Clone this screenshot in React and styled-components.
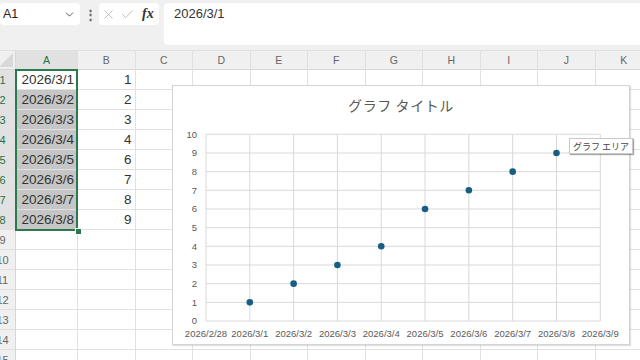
import React from 'react';
import styled, { createGlobalStyle } from 'styled-components';
import { ChevronDown, X, Check } from 'lucide-react';

const GlobalStyle = createGlobalStyle`
  html, body {
    margin: 0;
    padding: 0;
    width: 640px;
    height: 360px;
    overflow: hidden;
    background: #ffffff;
    font-family: "Liberation Sans", "Noto Sans CJK JP", sans-serif;
  }
`;

const Page = styled.div`
  width: 640px;
  height: 360px;
  display: flex;
  flex-direction: column;
  overflow: hidden;
`;

const TopBar = styled.div`
  height: 51px;
  flex: none;
  background: #f0f0f0;
  border-bottom: 1px solid #e0e0e0;
  box-sizing: border-box;
  display: flex;
  align-items: flex-start;
  padding-top: 3px;
  gap: 5px;
`;

const WhiteBox = styled.div`
  background: #ffffff;
  border-radius: 4px;
  height: ${(p) => p.$h || 22}px;
  box-sizing: border-box;
  display: flex;
  align-items: ${(p) => (p.$top ? 'flex-start' : 'center')};
`;

const NameBox = styled(WhiteBox)`
  width: 80px;
  padding: 0 4px 0 3px;
  justify-content: space-between;
  font-size: 12.5px;
  color: #222;
`;

const Kebab = styled.div`
  width: 10px;
  height: 22px;
  display: flex;
  align-items: center;
  justify-content: center;
  font-size: 13px;
  font-weight: bold;
  color: #666;
`;

const FxGroup = styled(WhiteBox)`
  width: 60px;
  padding: 0 4px 0 2px;
  gap: 4px;
  margin-left: -1px;
`;

const Fx = styled.span`
  font-family: "Liberation Serif", serif;
  font-style: italic;
  font-weight: bold;
  font-size: 14px;
  color: #333;
  margin-left: 3px;
`;

const FormulaBox = styled(WhiteBox)`
  flex: 1;
  padding: 3px 10px;
  font-size: 13px;
  color: #333;
  border-radius: 4px 0 0 4px;
`;

const Sheet = styled.div`
  position: relative;
  flex: 1;
  overflow: hidden;
`;

const Grid = styled.div`
  display: grid;
  margin-left: -12px;
  grid-template-columns: 28px 62px repeat(10, 57.5px);
  grid-template-rows: 19px;
  grid-auto-rows: 20px;
`;

const Corner = styled.div`
  background: #f0f0f0;
  border-right: 1px solid #d6d6d6;
  border-bottom: 1px solid #d6d6d6;
  box-sizing: border-box;
  position: relative;
  &::after {
    content: '';
    position: absolute;
    right: 2px;
    bottom: 2px;
    width: 14px;
    height: 14px;
    background: #d8d8d8;
    clip-path: polygon(100% 0, 100% 100%, 0 100%);
  }
`;

const ColHead = styled.div`
  background: ${(p) => (p.$active ? '#e1e1e1' : '#f0f0f0')};
  color: ${(p) => (p.$active ? '#217346' : '#666')};
  border-right: 1px solid #e0e0e0;
  border-bottom: 1px solid ${(p) => (p.$active ? '#217346' : '#d6d6d6')};
  box-sizing: border-box;
  font-size: 10.5px;
  display: flex;
  align-items: center;
  justify-content: center;
`;

const RowHead = styled.div`
  background: ${(p) => (p.$active ? '#e1e1e1' : '#f0f0f0')};
  color: ${(p) => (p.$active ? '#217346' : '#666')};
  border-right: 1px solid #d6d6d6;
  border-bottom: 1px solid #e0e0e0;
  box-sizing: border-box;
  font-size: 11px;
  display: flex;
  align-items: center;
  justify-content: center;
  padding-left: 2px;
`;

const Cell = styled.div`
  background: ${(p) => (p.$sel ? '#c6c6c6' : '#ffffff')};
  border-right: 1px solid #e1e1e1;
  border-bottom: 1px solid #e1e1e1;
  box-sizing: border-box;
  font-size: 13.5px;
  color: #333;
  display: flex;
  align-items: center;
  justify-content: flex-end;
  padding-right: 3px;
  overflow: hidden;
  white-space: nowrap;
`;

const Selection = styled.div`
  position: absolute;
  left: 15px;
  top: 18px;
  width: 63px;
  height: 162px;
  border: 2px solid #2a7a4b;
  box-sizing: border-box;
  pointer-events: none;
`;

const FillHandle = styled.div`
  position: absolute;
  left: 75px;
  top: 177px;
  width: 5px;
  height: 5px;
  background: #2a7a4b;
  border: 1px solid #ffffff;
`;

const Chart = styled.div`
  position: absolute;
  left: 172px;
  top: 34px;
  width: 458px;
  height: 260px;
  background: #ffffff;
  border: 1px solid #d4d4d4;
  box-shadow: 1px 1px 1px rgba(0, 0, 0, 0.12);
  box-sizing: border-box;
  display: flex;
  flex-direction: column;
  align-items: center;
`;

const ChartTitle = styled.div`
  height: 43px;
  flex: none;
  display: flex;
  align-items: center;
  padding-bottom: 5px;
  box-sizing: border-box;
  font-family: "Noto Sans CJK JP", sans-serif;
  font-size: 14px;
  letter-spacing: 0.6px;
  color: #595959;
`;

const Plot = styled.svg`
  display: block;
  margin-left: -2px;
  align-self: flex-start;
`;

const Tooltip = styled.div`
  position: absolute;
  left: 396px;
  top: 52px;
  height: 14px;
  padding: 0 3px;
  display: flex;
  align-items: center;
  background: #ffffff;
  border: 1px solid #c8c8c8;
  box-shadow: 1px 1px 1px rgba(0, 0, 0, 0.35);
  font-family: "Noto Sans CJK JP", sans-serif;
  font-size: 9px;
  color: #444;
  white-space: nowrap;
`;

const cols = ['A', 'B', 'C', 'D', 'E', 'F', 'G', 'H', 'I', 'J', 'K'];
const values = [1, 2, 3, 4, 6, 7, 8, 9];
const xLabels = ['2026/2/28', '2026/3/1', '2026/3/2', '2026/3/3', '2026/3/4', '2026/3/5', '2026/3/6', '2026/3/7', '2026/3/8', '2026/3/9'];

const P = { left: 35, right: 429.3, top: 5.3, bottom: 192 };

function ChartPlot() {
  const xs = (i) => P.left + ((P.right - P.left) * i) / 9;
  const ys = (v) => P.bottom - ((P.bottom - P.top) * v) / 10;
  return (
    <Plot width="458" height="215" viewBox="0 0 458 215">
      {Array.from({ length: 11 }, (_, v) => (
        <line key={'h' + v} x1={P.left} x2={P.right} y1={ys(v)} y2={ys(v)} stroke="#d9d9d9" strokeWidth="1" />
      ))}
      {Array.from({ length: 10 }, (_, i) => (
        <line key={'v' + i} x1={xs(i)} x2={xs(i)} y1={P.top} y2={P.bottom} stroke="#d9d9d9" strokeWidth="1" />
      ))}
      {Array.from({ length: 11 }, (_, v) => (
        <text key={'yl' + v} x={P.left - 9} y={ys(v) + 3.4} textAnchor="end" fontSize="9.5" fill="#595959" fontFamily="Liberation Sans, sans-serif">
          {v}
        </text>
      ))}
      {xLabels.map((l, i) => (
        <text key={'xl' + i} x={xs(i)} y={207.5} textAnchor="middle" fontSize="9.5" fill="#595959" fontFamily="Liberation Sans, sans-serif">
          {l}
        </text>
      ))}
      {values.map((v, i) => (
        <circle key={'p' + i} cx={xs(i + 1)} cy={ys(v)} r="3.3" fill="#156082" />
      ))}
    </Plot>
  );
}

export default function App() {
  const rows = Array.from({ length: 15 }, (_, i) => i + 1);
  return (
    <Page>
      <GlobalStyle />
      <TopBar>
        <NameBox>
          <span>A1</span>
          <ChevronDown size={13} color="#444" strokeWidth={1.6} />
        </NameBox>
        <Kebab>⋮</Kebab>
        <FxGroup>
          <X size={15} color="#b8b8b8" strokeWidth={1.4} />
          <Check size={15} color="#b8b8b8" strokeWidth={1.4} />
          <Fx>fx</Fx>
        </FxGroup>
        <FormulaBox $h={42} $top>2026/3/1</FormulaBox>
      </TopBar>
      <Sheet>
        <Grid>
          <Corner />
          {cols.map((c) => (
            <ColHead key={c} $active={c === 'A'}>{c}</ColHead>
          ))}
          {rows.map((r) => (
            <React.Fragment key={r}>
              <RowHead $active={r <= 8}>{r}</RowHead>
              {cols.map((c) => {
                let text = '';
                if (r <= 8 && c === 'A') text = `2026/3/${r}`;
                if (r <= 8 && c === 'B') text = values[r - 1];
                return (
                  <Cell key={c} $sel={c === 'A' && r >= 2 && r <= 8}>{text}</Cell>
                );
              })}
            </React.Fragment>
          ))}
        </Grid>
        <Selection />
        <FillHandle />
        <Chart>
          <ChartTitle>グラフ タイトル</ChartTitle>
          <ChartPlot />
          <Tooltip>グラフ エリア</Tooltip>
        </Chart>
      </Sheet>
    </Page>
  );
}
